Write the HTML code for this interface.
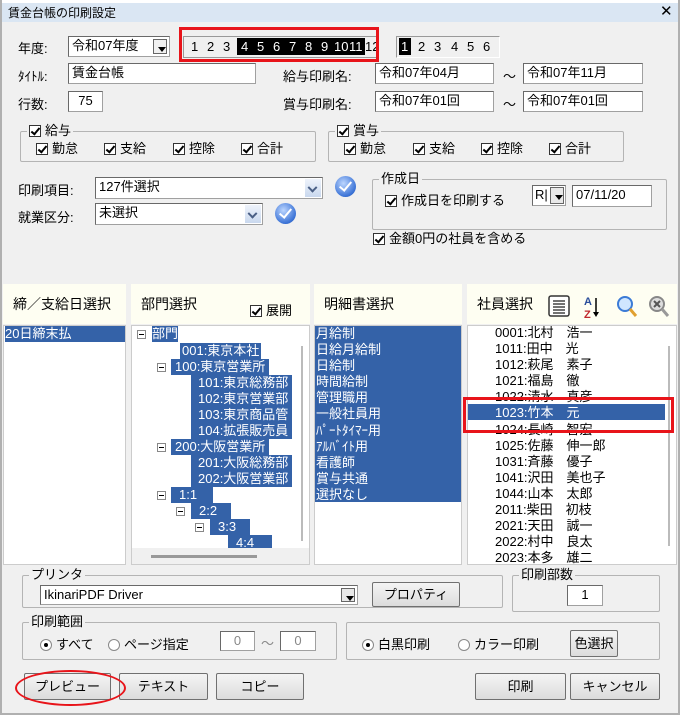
<!DOCTYPE html>
<html><head><meta charset="utf-8"><style>
*{box-sizing:border-box;margin:0;padding:0}
body{width:680px;height:715px;background:#f0f0f0;font-family:"Liberation Sans","Noto Sans CJK JP",sans-serif;font-size:13px;color:#000;position:relative;overflow:hidden}
.a{position:absolute;white-space:nowrap}
.in{position:absolute;background:#fff;border:1px solid #a0a0a0;border-top-color:#696969;border-left-color:#696969;padding:1px 3px;font-size:13px;line-height:16px}
.grp{position:absolute;border:1px solid #b4b4b4;border-radius:2px}
.grp .lg{position:absolute;top:-9px;left:6px;background:#f0f0f0;padding:0 2px;line-height:16px}
.cb{display:inline-block;width:12px;height:12px;border:1px solid #333;background:#fff;vertical-align:-2px;margin-right:4px;position:relative}
.cb:after{content:"";position:absolute;left:3px;top:0px;width:3px;height:7px;border:solid #000;border-width:0 2px 2px 0;transform:rotate(40deg)}
.rb{display:inline-block;width:12px;height:12px;border:1px solid #888;border-radius:50%;background:#fff;vertical-align:-2px;margin-right:4px;position:relative}
.rb.on:after{content:"";position:absolute;left:3px;top:3px;width:4px;height:4px;border-radius:50%;background:#000}
.btn{position:absolute;border:1px solid #707070;border-radius:2px;background:linear-gradient(#f4f4f4,#dcdcdc);text-align:center;font-size:13px}
.dd{position:absolute;right:1px;top:1px;bottom:1px;width:16px;background:#e8e8e8;border-left:1px solid #aaa}
.dd:after{content:"";position:absolute;left:4px;top:7px;border:4px solid transparent;border-top:5px solid #000}
.dd2{position:absolute;right:1px;top:1px;bottom:1px;width:16px;background:linear-gradient(#eef3fb,#c9d8ee)}
.dd2:after{content:"";position:absolute;left:4px;top:8px;width:5px;height:5px;border:solid #4a5f85;border-width:0 2px 2px 0;transform:rotate(45deg) translate(-2px,-2px)}
.ok{position:absolute;width:21px;height:21px;border-radius:50%;background:radial-gradient(circle at 40% 35%,#bcd6ff,#3a72d6 70%,#254f9e);}
.ok:after{content:"";position:absolute;left:7px;top:3px;width:5px;height:10px;border:solid #fff;border-width:0 2px 2px 0;transform:rotate(40deg)}
.hd{position:absolute;top:284px;height:40px;background:#fefef2;line-height:40px;padding-left:10px;font-size:14px}
.lb{position:absolute;top:325px;height:240px;background:#fff;border:1px solid #ccc;overflow:hidden}
.sel{position:absolute;background:#3462a8;color:#fff;line-height:16px;height:16px}
.tb{position:absolute;width:9px;height:9px;border:1px solid #888;background:#fff}
.tb:after{content:"";position:absolute;left:1px;top:3px;width:5px;height:1px;background:#000}
.n{position:absolute;top:38px;font-size:13px;line-height:17px}
.w{color:#fff}
</style></head><body>
<div class="a" style="left:0;top:0;width:680px;height:22px;background:#dae6f3;border-top:3px solid #fff"></div>
<div class="a" style="left:0;top:0;width:2px;height:715px;background:#b0b0b0"></div>
<div class="a" style="left:678px;top:0;width:2px;height:715px;background:#b0b0b0"></div>
<div class="a" style="left:0;top:713px;width:680px;height:2px;background:#b0b0b0"></div>
<div class="a" style="left:8px;top:4px;font-size:12px">賃金台帳の印刷設定</div>
<div class="a" style="left:660px;top:2px;font-size:15px">✕</div>

<div class="a" style="left:18px;top:38px">年度:</div>
<div class="in" style="left:68px;top:36px;width:102px;height:21px">令和07年度<div class="dd" style="width:14px;background:#f0f0f0;border:1px solid #666;right:2px;top:2px;bottom:2px"></div></div>
<div class="a" style="left:183px;top:36px;width:196px;height:22px;border:1px solid #999;background:#f0f0f0"></div>
<div class="a" style="left:237px;top:38px;width:128px;height:17px;background:#000"></div>
<span class="n" style="left:191px">1</span><span class="n" style="left:207px">2</span><span class="n" style="left:223px">3</span>
<span class="n w" style="left:241px">4</span><span class="n w" style="left:257px">5</span><span class="n w" style="left:273px">6</span><span class="n w" style="left:289px">7</span><span class="n w" style="left:305px">8</span><span class="n w" style="left:321px">9</span><span class="n w" style="left:334px">10</span><span class="n w" style="left:349px">11</span><span class="n" style="left:365px">12</span>
<div class="a" style="left:179px;top:27px;width:200px;height:35px;border:3px solid #e8141a"></div>
<div class="a" style="left:396px;top:36px;width:104px;height:22px;border:1px solid #999;border-right-color:#fff;border-bottom-color:#fff"></div>
<div class="a" style="left:399px;top:38px;width:12px;height:17px;background:#000"></div>
<span class="n w" style="left:401px">1</span><span class="n" style="left:418px">2</span><span class="n" style="left:434px">3</span><span class="n" style="left:451px">4</span><span class="n" style="left:467px">5</span><span class="n" style="left:483px">6</span>

<div class="a" style="left:18px;top:66px">ﾀｲﾄﾙ:</div>
<div class="in" style="left:68px;top:63px;width:188px;height:21px">賃金台帳</div>
<div class="a" style="left:283px;top:66px">給与印刷名:</div>
<div class="in" style="left:375px;top:63px;width:119px;height:21px">令和07年04月</div>
<div class="a" style="left:503px;top:66px">～</div>
<div class="in" style="left:523px;top:63px;width:120px;height:21px">令和07年11月</div>

<div class="a" style="left:18px;top:94px">行数:</div>
<div class="in" style="left:68px;top:91px;width:35px;height:21px;text-align:center">75</div>
<div class="a" style="left:283px;top:94px">賞与印刷名:</div>
<div class="in" style="left:375px;top:91px;width:119px;height:21px">令和07年01回</div>
<div class="a" style="left:503px;top:94px">～</div>
<div class="in" style="left:523px;top:91px;width:120px;height:21px">令和07年01回</div>

<div class="grp" style="left:20px;top:131px;width:296px;height:31px"><div class="lg"><span class="cb"></span>給与</div></div>
<div class="a" style="left:36px;top:138px"><span class="cb"></span>勤怠</div>
<div class="a" style="left:104px;top:138px"><span class="cb"></span>支給</div>
<div class="a" style="left:173px;top:138px"><span class="cb"></span>控除</div>
<div class="a" style="left:241px;top:138px"><span class="cb"></span>合計</div>
<div class="grp" style="left:328px;top:131px;width:296px;height:31px"><div class="lg"><span class="cb"></span>賞与</div></div>
<div class="a" style="left:344px;top:138px"><span class="cb"></span>勤怠</div>
<div class="a" style="left:413px;top:138px"><span class="cb"></span>支給</div>
<div class="a" style="left:481px;top:138px"><span class="cb"></span>控除</div>
<div class="a" style="left:549px;top:138px"><span class="cb"></span>合計</div>

<div class="a" style="left:18px;top:180px">印刷項目:</div>
<div class="in" style="left:95px;top:177px;width:228px;height:22px">127件選択<div class="dd2"></div></div>
<div class="ok" style="left:335px;top:176px"></div>
<div class="a" style="left:18px;top:207px">就業区分:</div>
<div class="in" style="left:95px;top:203px;width:168px;height:22px">未選択<div class="dd2"></div></div>
<div class="ok" style="left:275px;top:203px"></div>

<div class="grp" style="left:372px;top:179px;width:295px;height:51px"><div class="lg">作成日</div></div>
<div class="a" style="left:385px;top:190px"><span class="cb"></span>作成日を印刷する</div>
<div class="in" style="left:532px;top:185px;width:34px;height:21px;padding:1px 2px">R|<div class="dd" style="width:14px;border:1px solid #666;right:1px"></div></div>
<div class="in" style="left:572px;top:185px;width:80px;height:22px">07/11/20</div>
<div class="a" style="left:373px;top:228px"><span class="cb"></span>金額0円の社員を含める</div>

<div class="hd" style="left:3px;width:123px">締／支給日選択</div>
<div class="hd" style="left:131px;width:179px">部門選択</div>
<div class="a" style="left:250px;top:300px"><span class="cb"></span>展開</div>
<div class="hd" style="left:314px;width:148px">明細書選択</div>
<div class="hd" style="left:467px;width:210px">社員選択</div>
<svg class="a" style="left:548px;top:294px" width="125" height="26" viewBox="0 0 125 26">
<rect x="1" y="2" width="20" height="20" rx="2" fill="#fff" stroke="#333" stroke-width="1.5"/>
<g stroke="#444" stroke-width="1.5"><line x1="5" y1="7" x2="17" y2="7"/><line x1="5" y1="10" x2="17" y2="10"/><line x1="5" y1="13" x2="17" y2="13"/><line x1="5" y1="16" x2="17" y2="16"/><line x1="5" y1="19" x2="17" y2="19"/></g>
<text x="36" y="11" font-size="11" font-weight="bold" fill="#2a4d9b" font-family="Liberation Sans">A</text>
<text x="36" y="24" font-size="11" font-weight="bold" fill="#c0282d" font-family="Liberation Sans">Z</text>
<line x1="48" y1="4" x2="48" y2="21" stroke="#000" stroke-width="1.5"/><path d="M45 18 L48 23 L51 18Z"/>
<circle cx="77" cy="10" r="7" fill="#cfe6ff" stroke="#3b7bd6" stroke-width="2"/>
<line x1="82" y1="15" x2="88" y2="22" stroke="#e0a030" stroke-width="3"/>
<circle cx="109" cy="10" r="7" fill="#ddd" stroke="#888" stroke-width="2"/>
<path d="M106 7 L112 13 M112 7 L106 13" stroke="#555" stroke-width="2"/>
<line x1="114" y1="15" x2="120" y2="22" stroke="#999" stroke-width="3"/>
</svg>

<div class="lb" style="left:3px;width:123px"><div class="sel" style="left:1px;top:0;width:120px">20日締末払</div></div>
<div class="lb" style="left:131px;width:179px">
<div class="tb" style="left:5px;top:4px"></div>
<div class="sel" style="left:20px;top:0">部門</div>
<div class="sel" style="left:48px;top:17px;padding:0 2px">001:東京本社</div>
<div class="tb" style="left:25px;top:37px"></div>
<div class="sel" style="left:39px;top:33px;padding:0 4px">100:東京営業所</div>
<div class="sel" style="left:59px;top:49px;width:101px;padding-left:7px">101:東京総務部</div>
<div class="sel" style="left:59px;top:65px;width:101px;padding-left:7px">102:東京営業部</div>
<div class="sel" style="left:59px;top:81px;width:101px;padding-left:7px">103:東京商品管</div>
<div class="sel" style="left:59px;top:97px;width:101px;padding-left:7px">104:拡張販売員</div>
<div class="tb" style="left:25px;top:117px"></div>
<div class="sel" style="left:39px;top:113px;padding:0 4px">200:大阪営業所</div>
<div class="sel" style="left:59px;top:129px;width:101px;padding-left:7px">201:大阪総務部</div>
<div class="sel" style="left:59px;top:145px;width:101px;padding-left:7px">202:大阪営業部</div>
<div class="tb" style="left:25px;top:165px"></div>
<div class="sel" style="left:39px;top:161px;width:42px;padding-left:8px">1:1</div>
<div class="tb" style="left:44px;top:181px"></div>
<div class="sel" style="left:59px;top:177px;width:40px;padding-left:8px">2:2</div>
<div class="tb" style="left:63px;top:197px"></div>
<div class="sel" style="left:78px;top:193px;width:40px;padding-left:8px">3:3</div>
<div class="sel" style="left:96px;top:209px;width:44px;padding-left:8px">4:4</div>
<div class="a" style="left:169px;top:20px;width:2px;height:195px;background:#bbb"></div>
<div class="a" style="left:0;top:222px;width:177px;height:17px;background:#f0f0f0"></div>
<div class="a" style="left:19px;top:229px;width:106px;height:3px;background:#999"></div>
</div>
<div class="lb" style="left:314px;width:148px"><div class="a" style="left:0;top:0;width:146px;height:176px;background:#3462a8"></div>
<div class="a" style="left:1px;top:0;color:#fff;line-height:16.1px;white-space:pre">月給制
日給月給制
日給制
時間給制
管理職用
一般社員用
ﾊﾟｰﾄﾀｲﾏｰ用
ｱﾙﾊﾞｲﾄ用
看護師
賞与共通
選択なし</div></div>
<div class="lb" style="left:467px;width:210px">
<div class="sel" style="left:0;top:78px;width:197px"></div>
<div class="a" style="left:27px;top:-1px;line-height:16.1px;white-space:pre">0001:北村　浩一
1011:田中　光
1012:萩尾　素子
1021:福島　徹
1022:清水　真彦
<span style="color:#fff">1023:竹本　元</span>
1024:長崎　智宏
1025:佐藤　伸一郎
1031:斉藤　優子
1041:沢田　美也子
1044:山本　太郎
2011:柴田　初枝
2021:天田　誠一
2022:村中　良太
2023:本多　雄二</div>
<div class="a" style="left:200px;top:20px;width:2px;height:200px;background:#bbb"></div>
</div>
<div class="a" style="left:463px;top:397px;width:211px;height:36px;border:3px solid #e8141a"></div>

<div class="grp" style="left:22px;top:575px;width:481px;height:33px"><div class="lg">プリンタ</div></div>
<div class="in" style="left:40px;top:585px;width:318px;height:20px;padding-top:1px">IkinariPDF Driver<div class="dd" style="width:14px;border:1px solid #666;right:2px;top:2px;bottom:2px"></div></div>
<div class="btn" style="left:372px;top:582px;width:88px;height:25px;line-height:23px">プロパティ</div>
<div class="grp" style="left:512px;top:575px;width:148px;height:37px"><div class="lg">印刷部数</div></div>
<div class="in" style="left:567px;top:585px;width:36px;height:21px;text-align:center">1</div>

<div class="grp" style="left:22px;top:622px;width:315px;height:38px"><div class="lg">印刷範囲</div></div>
<div class="a" style="left:40px;top:634px"><span class="rb on"></span>すべて</div>
<div class="a" style="left:108px;top:634px"><span class="rb"></span>ページ指定</div>
<div class="in" style="left:220px;top:631px;width:35px;height:20px;text-align:center;color:#888">0</div>
<div class="a" style="left:261px;top:633px;color:#888">～</div>
<div class="in" style="left:280px;top:631px;width:36px;height:20px;text-align:center;color:#888">0</div>
<div class="grp" style="left:346px;top:622px;width:314px;height:38px"></div>
<div class="a" style="left:362px;top:634px"><span class="rb on"></span>白黒印刷</div>
<div class="a" style="left:458px;top:634px"><span class="rb"></span>カラー印刷</div>
<div class="btn" style="left:570px;top:630px;width:48px;height:27px;line-height:25px">色選択</div>

<div class="btn" style="left:24px;top:673px;width:87px;height:27px;line-height:25px">プレビュー</div>
<div class="btn" style="left:119px;top:673px;width:89px;height:27px;line-height:25px">テキスト</div>
<div class="btn" style="left:216px;top:673px;width:88px;height:27px;line-height:25px">コピー</div>
<div class="btn" style="left:475px;top:673px;width:91px;height:27px;line-height:25px">印刷</div>
<div class="btn" style="left:570px;top:673px;width:90px;height:27px;line-height:25px">キャンセル</div>
<div class="a" style="left:15px;top:670px;width:111px;height:36px;border:2px solid #e8141a;border-radius:50%"></div>
</body></html>
